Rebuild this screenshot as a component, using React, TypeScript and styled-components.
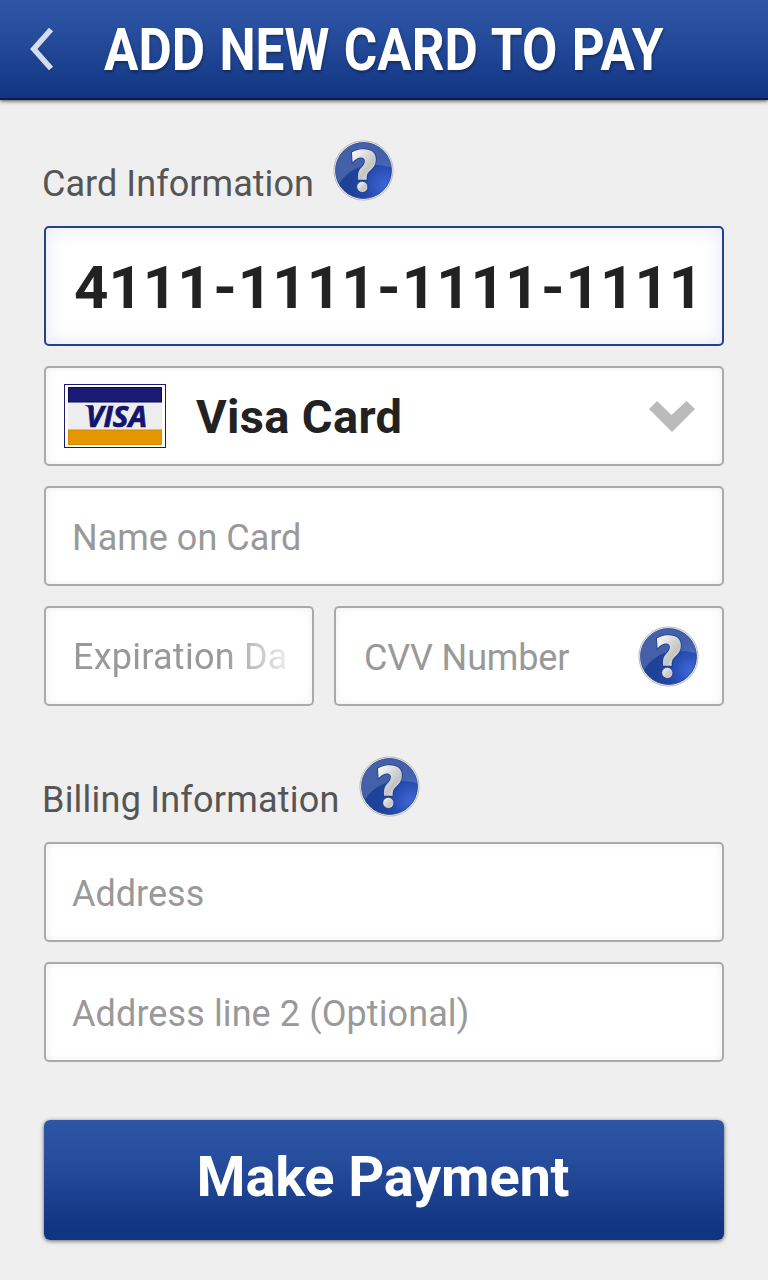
import React, { useId } from "react";
import styled, { createGlobalStyle, css } from "styled-components";

const GlobalStyle = createGlobalStyle`
  * { box-sizing: border-box; }
  html, body { margin: 0; background: #efefef; }
  body { font-family: Roboto, "Liberation Sans", sans-serif; }
  button { font-family: inherit; }
`;

const Screen = styled.div`
  width: 768px;
  height: 1280px;
  overflow: hidden;
  background: #efefef;
`;

const Header = styled.header`
  display: flex;
  align-items: flex-start;
  height: 100px;
  padding-left: 30px;
  background: linear-gradient(#2e55a4 0%, #2950a0 25%, #113582 100%);
  border-bottom: 2px solid #0b1c46;
  box-shadow: 0 1px 4px rgba(0, 0, 0, 0.7);
`;

const BackButton = styled.button`
  display: flex;
  width: 24px;
  margin: 27px 50px 0 0;
  padding: 0;
  border: 0;
  background: none;
`;

const Title = styled.h1`
  margin: 15px 0 0;
  color: #fff;
  font-size: 59.5px;
  font-weight: 700;
  line-height: 70px;
  white-space: nowrap;
  word-spacing: 2px;
  text-shadow: 1px 2px 3px rgba(0, 0, 0, 0.35);
  transform: scaleX(0.861);
  transform-origin: left;
`;

const Form = styled.main`
  display: flex;
  flex-direction: column;
  gap: 20px;
  padding: 40px 44px 0;
`;

const SectionHead = styled.div<{ $spaced?: boolean }>`
  display: flex;
  gap: 19px;
  height: 66px;
  margin-left: -2px;
  margin-top: ${(p) => (p.$spaced ? "30px" : "0")};
`;

const Label = styled.h2<{ $tracking: number }>`
  margin: 23px 0 0;
  color: #555;
  font-size: 36px;
  font-weight: 400;
  line-height: 42px;
  letter-spacing: ${(p) => p.$tracking}px;
  white-space: nowrap;
`;

const Field = styled.div<{ $focused?: boolean }>`
  display: flex;
  align-items: center;
  flex: 1 0 auto;
  height: ${(p) => (p.$focused ? 120 : 100)}px;
  border: 2px solid #aaa;
  border-radius: 5px;
  background: #fff;
  padding: 0 26px;
  box-shadow: inset 0 0 8px rgba(0, 0, 0, 0.07);
  ${(p) =>
    p.$focused &&
    css`
      border-color: #1f4390;
      padding: 0 28px;
      box-shadow: inset 0 0 20px rgba(31, 67, 144, 0.12);
    `}
`;

const Group = styled.div`
  display: flex;
  flex-direction: column;
  gap: 20px;
`;

const SplitRow = styled.div`
  display: grid;
  grid-template-columns: 270px 390px;
  gap: 20px;
`;

const Placeholder = styled.span<{ $tracking?: number; $fade?: boolean }>`
  color: #999;
  font-size: 36px;
  line-height: 42px;
  padding-top: 3px;
  letter-spacing: ${(p) => p.$tracking ?? 0}px;
  white-space: nowrap;
  ${(p) =>
    p.$fade &&
    css`
      padding-top: 1px;
      margin-left: 1px;
      mask-image: linear-gradient(90deg, #000 150px, rgba(0, 0, 0, 0.2) 212px);
    `}
`;

const CardNumber = styled.span`
  padding-top: 3px;
  color: #222;
  font-size: 60px;
  font-weight: 700;
  line-height: 70px;
  white-space: nowrap;
`;

const Dash = styled.span`
  margin: 0 1px 0 1.5px;
`;

const CardType = styled.span`
  flex: 1;
  margin-left: 30px;
  padding-top: 2px;
  color: #222;
  font-size: 47px;
  font-weight: 700;
  line-height: 56px;
  letter-spacing: 0.35px;
  white-space: nowrap;
`;

const SelectField = styled(Field)`
  padding: 0 26px 0 18px;
`;

const CvvField = styled(Field)`
  justify-content: space-between;
  padding: 0 22px 0 28px;
`;

const Icon = styled.svg`
  display: block;
  flex: none;
`;

const LoweredIcon = styled.span`
  padding-top: 2px;
`;

const PayButton = styled.button`
  height: 120px;
  margin-top: 38px;
  padding: 0 2px 6px 0;
  border: 0;
  border-radius: 6px;
  background: linear-gradient(#2e55a4 0%, #2950a0 25%, #113582 90%);
  box-shadow: 0 1px 4px rgba(0, 0, 0, 0.6);
  color: #fff;
  font-size: 56px;
  font-weight: 700;
  line-height: 66px;
  letter-spacing: -0.2px;
`;

const HelpIcon = () => {
  const id = useId();
  return (
    <Icon width="62" height="62" viewBox="0 0 62 62" aria-hidden="true">
      <defs>
        <radialGradient id={`${id}b`} cx="0.9" cy="0.76" r="0.6">
          <stop offset="0" stopColor="#3f67da" />
          <stop offset="0.7" stopColor="#2146a5" />
          <stop offset="1" stopColor="#1f4299" />
        </radialGradient>
        <linearGradient id={`${id}q`} x1="0" y1="0" x2="1" y2="1">
          <stop offset="0" stopColor="#fff" />
          <stop offset="0.35" stopColor="#dedede" />
          <stop offset="0.65" stopColor="#c4c4c4" />
          <stop offset="1" stopColor="#f5f5f5" />
        </linearGradient>
      </defs>
      <circle cx="30.5" cy="30.5" r="29.6" fill="#f8f7f4" stroke="#b8b8b8" strokeWidth="1" />
      <circle cx="30.5" cy="30.5" r="28" fill={`url(#${id}b)`} stroke="#183b8c" strokeWidth="0.8" />
      <path
        d="M6.5 43.500 C3 38 2.500 33 2.500 30.500 A28 28 0 0 1 58.300 27.500 C42 22 27 25 17 32 C12 35.500 9 39 6.500 43.500Z"
        fill="#fff"
        opacity="0.16"
      />
      <path
        d="M19 12.200 C24 9.800 27.500 9.300 31 9.300 C38.500 9.300 42.900 13 42.900 19 C42.900 24.500 40.500 27.500 37.500 30.200 C34.500 33 33.700 34.500 33.700 39.800 H25 C24.700 33 25.500 30.500 28.500 27.500 C30.800 25.200 31.800 23.500 31.800 20.800 C31.800 18.500 30.200 17.200 27.500 17.400 C24.500 17.600 21.800 19.500 19.500 22.200Z"
        fill={`url(#${id}q)`}
        stroke="#173b91"
        strokeWidth="1.5"
        paintOrder="stroke"
      />
      <circle cx="29.3" cy="46.9" r="5.6" fill={`url(#${id}q)`} stroke="#173b91" strokeWidth="0.8" />
    </Icon>
  );
};

const VisaLogo = () => (
  <Icon width="102" height="64" viewBox="0 0 102 64" aria-label="Visa">
    <rect x="0.5" y="0.5" width="101" height="63" fill="#fff" stroke="#1a1a75" />
    <rect x="4" y="3" width="94" height="58" fill="#ededed" />
    <rect x="4.5" y="3.5" width="93" height="14.5" fill="#1b1b75" stroke="#070760" />
    <rect x="4.5" y="46" width="93" height="14.5" fill="#e59700" stroke="#d98a00" />
    <text
      x="22"
      y="42.5"
      fill="#14146f"
      stroke="#14146f"
      strokeWidth="0.7"
      fontFamily="Open Sans"
      fontSize="29"
      fontWeight="700"
      fontStyle="italic"
      textLength="61"
      lengthAdjust="spacingAndGlyphs"
    >
      VISA
    </text>
    <path d="M20.500 21.300 H29 L30 26 H26.500 Q24.500 22.500 20.500 21.300Z" fill="#14146f" />
  </Icon>
);

const cardGroups = ["4111", "1111", "1111", "1111"];

export default function App() {
  return (
    <Screen>
      <GlobalStyle />
      <Header>
        <BackButton aria-label="Back">
          <Icon width="24" height="44" viewBox="0 0 24 44" fill="none">
            <path d="M21 2.500 L3.800 22 L21 41.500" stroke="#d5dcec" strokeWidth="5.600" />
          </Icon>
        </BackButton>
        <Title>ADD NEW CARD TO PAY</Title>
      </Header>
      <Form>
        <SectionHead>
          <Label $tracking={0.05}>Card Information</Label>
          <HelpIcon />
        </SectionHead>
        <Group>
          <Field $focused>
            <CardNumber>
              {cardGroups.map((group, i) => (
                <React.Fragment key={i}>
                  {i > 0 && <Dash>-</Dash>}
                  {group}
                </React.Fragment>
              ))}
            </CardNumber>
          </Field>
          <SelectField>
            <VisaLogo />
            <CardType>Visa Card</CardType>
            <LoweredIcon>
              <Icon width="48" height="34" viewBox="0 0 48 34">
                <path d="M1 9 L9 1 L23.500 15 L38.500 1 L47 9 L24 32Z" fill="#bbb" />
              </Icon>
            </LoweredIcon>
          </SelectField>
          <Field>
            <Placeholder>Name on Card</Placeholder>
          </Field>
          <SplitRow>
            <Field>
              <Placeholder $fade $tracking={0.25}>
                Expiration Da
              </Placeholder>
            </Field>
            <CvvField>
              <Placeholder $tracking={-0.15}>CVV Number</Placeholder>
              <LoweredIcon>
                <HelpIcon />
              </LoweredIcon>
            </CvvField>
          </SplitRow>
        </Group>
        <SectionHead $spaced>
          <Label $tracking={0.22}>Billing Information</Label>
          <HelpIcon />
        </SectionHead>
        <Group>
          <Field>
            <Placeholder>Address</Placeholder>
          </Field>
          <Field>
            <Placeholder $tracking={0.1}>Address line 2 (Optional)</Placeholder>
          </Field>
        </Group>
        <PayButton>Make Payment</PayButton>
      </Form>
    </Screen>
  );
}
